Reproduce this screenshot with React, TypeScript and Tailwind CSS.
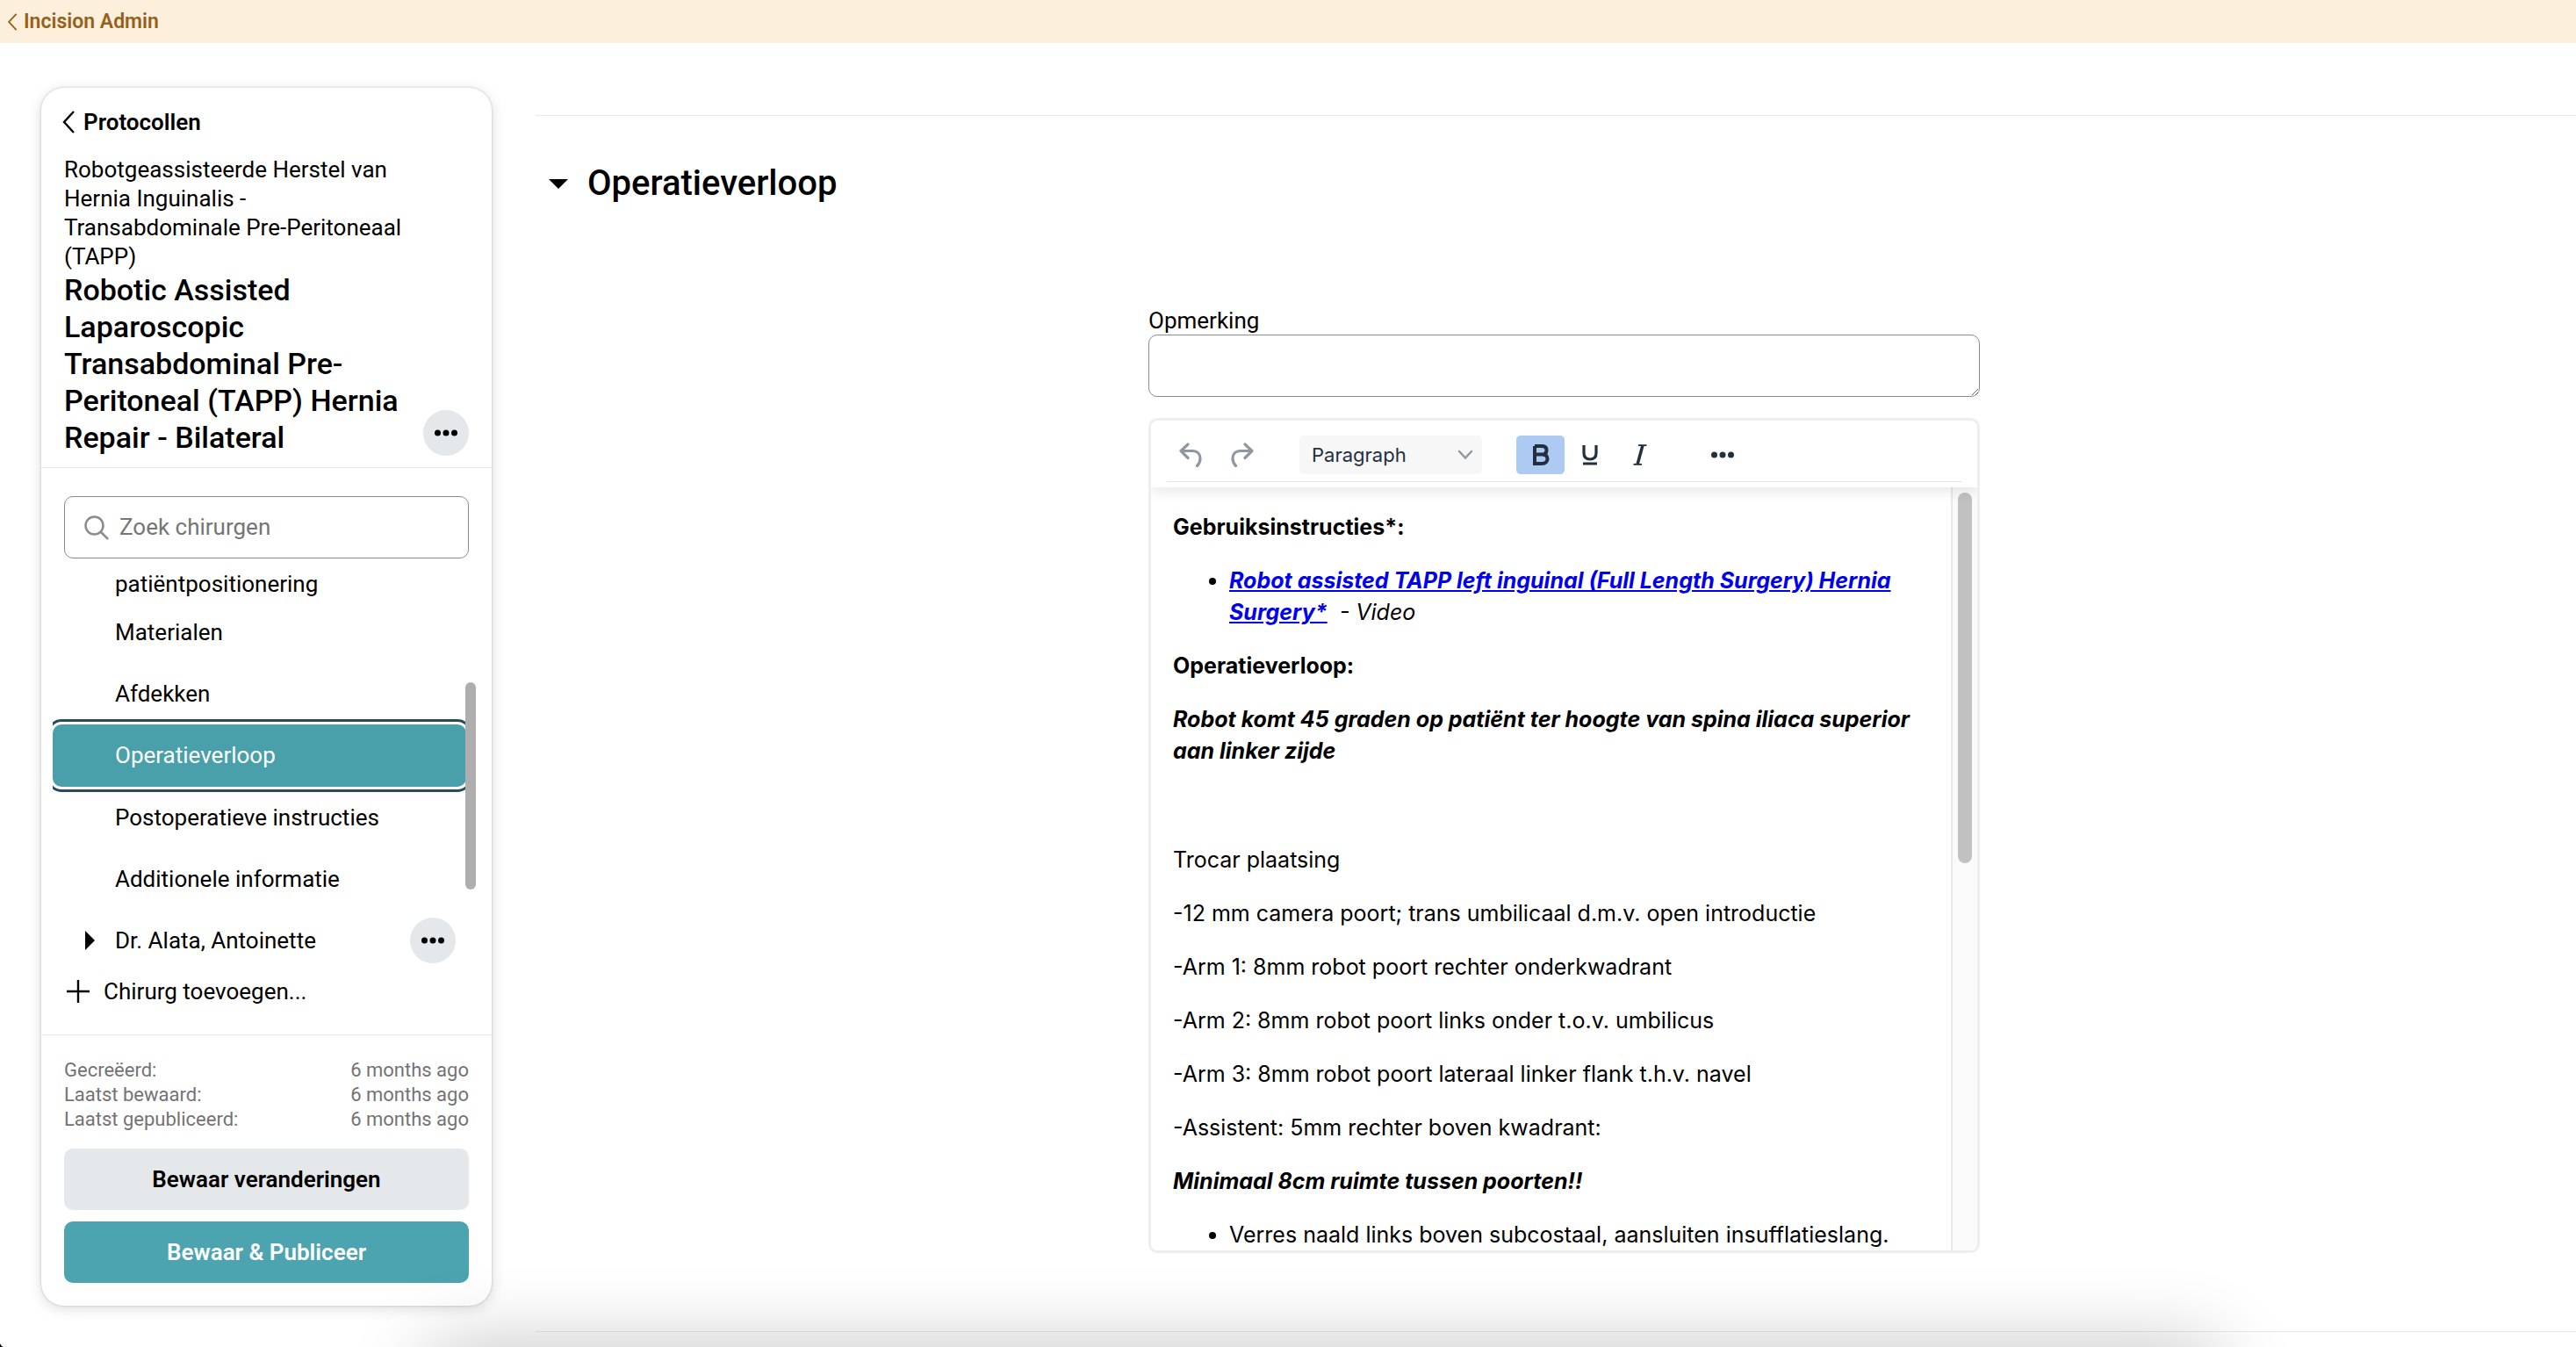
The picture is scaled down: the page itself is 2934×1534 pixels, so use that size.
import React from "react";

const items = ["Materialen", "Afdekken", "Operatieverloop", "Postoperatieve instructies", "Additionele informatie"];

const meta = [
  ["Gecreëerd:", "6 months ago"],
  ["Laatst bewaard:", "6 months ago"],
  ["Laatst gepubliceerd:", "6 months ago"],
];

const steps = [
  "-12 mm camera poort; trans umbilicaal d.m.v. open introductie",
  "-Arm 1: 8mm robot poort rechter onderkwadrant",
  "-Arm 2: 8mm robot poort links onder t.o.v. umbilicus",
  "-Arm 3: 8mm robot poort lateraal linker flank t.h.v. navel",
  "-Assistent: 5mm rechter boven kwadrant:",
];

function ChevronLeft({ className }: { className: string }) {
  return (
    <svg viewBox="0 0 14 26" className={className} fill="none" stroke="currentColor" strokeWidth="2.4">
      <path d="M13 1 2 13l11 12" />
    </svg>
  );
}

function MoreButton({ label }: { label: string }) {
  return (
    <button aria-label={label} className="flex size-[52px] shrink-0 items-center justify-center rounded-full bg-[#e4e8eb]">
      <svg viewBox="0 0 26 8" className="h-2 w-[26px]">
        <circle cx="3.5" cy="4" r="3.5" />
        <circle cx="13" cy="4" r="3.5" />
        <circle cx="22.5" cy="4" r="3.5" />
      </svg>
    </button>
  );
}

function Sidebar() {
  return (
    <aside className="mt-[51px] mb-[47px] ml-[47px] flex w-[513px] shrink-0 flex-col rounded-[26px] bg-white shadow-[0_0_3px_rgba(0,0,0,0.2),0_3px_16px_rgba(0,0,0,0.14)]">
      <header className="border-b border-[#e9e9e9] px-[26px] pt-[22px] pb-[13px]">
        <a href="#protocollen" className="-ml-0.5 flex items-center gap-2.5 text-[26px] leading-[34px] font-semibold">
          <ChevronLeft className="h-[26px] w-3.5" />
          Protocollen
        </a>
        <p className="mt-[21px] w-[400px] text-[26px] leading-[33px]">
          Robotgeassisteerde Herstel van Hernia Inguinalis - Transabdominale Pre-Peritoneaal (TAPP)
        </p>
        <div className="flex items-end justify-between">
          <h1 className="w-[400px] text-[34px] leading-[42px] font-medium">
            Robotic Assisted Laparoscopic Transabdominal Pre-Peritoneal (TAPP) Hernia Repair - Bilateral
          </h1>
          <MoreButton label="Protocolopties" />
        </div>
      </header>

      <label className="mx-[26px] mt-8 flex h-[71px] shrink-0 items-center gap-3 rounded-[10px] border border-[#8c8c8c] px-[22px]">
        <svg viewBox="0 0 28 28" className="size-7 shrink-0" fill="none" stroke="#8c8c8c" strokeWidth="2.5">
          <circle cx="11.5" cy="11.5" r="10" />
          <path d="m18.5 18.5 8.500 8.500" />
        </svg>
        <input
          type="search"
          aria-label="Zoek chirurgen"
          placeholder="Zoek chirurgen"
          className="w-full min-w-0 text-[26px] outline-none placeholder:text-[#757575]"
        />
      </label>

      <div className="relative min-h-0 flex-1 pr-[29px] pl-[13px] text-[26px]">
        <nav className="overflow-hidden">
          <a href="#patientpositionering" className="block h-[49px] pt-3 pl-[71px] leading-[34px]">patiëntpositionering</a>
          {items.map((item) =>
            item === "Operatieverloop" ? (
              <a
                key={item}
                href="#operatieverloop"
                aria-current="page"
                className="flex h-[71px] items-center rounded-[10px] bg-[#49a0aa] pl-[71px] text-white shadow-[0_0_0_3px_#fff,0_0_0_6px_#2a4c5a]"
              >
                {item}
              </a>
            ) : (
              <a key={item} href={"#" + item} className="flex h-[70px] items-center pl-[71px]">{item}</a>
            ),
          )}
        </nav>
        <div className="absolute top-[141px] right-[18px] h-[236px] w-3 rounded-full bg-[#aeaeae]" />
        <div className="flex h-[70px] items-center pr-3 pl-[37px]">
          <svg viewBox="0 0 11 22" className="mr-[23px] h-[22px] w-[11px]">
            <path d="M0 0 11 11 0 22z" />
          </svg>
          <span className="flex-1">Dr. Alata, Antoinette</span>
          <MoreButton label="Opties voor Dr. Alata" />
        </div>
        <button className="flex h-[46px] items-center gap-4 pl-4">
          <svg viewBox="0 0 26 26" className="size-[26px]" stroke="#000" strokeWidth="2.400">
            <path d="M13 0v26M0 13h26" />
          </svg>
          Chirurg toevoegen...
        </button>
      </div>

      <footer className="border-t border-[#e9e9e9] px-[26px] pt-[26px] pb-[26px]">
        <dl className="text-[22px] leading-7 text-[#737373]">
          {meta.map(([name, value]) => (
            <div key={name} className="flex justify-between">
              <dt>{name}</dt>
              <dd>{value}</dd>
            </div>
          ))}
        </dl>
        <button className="mt-[19px] h-[70px] w-full rounded-[10px] bg-[#e4e8eb] text-[26px] font-semibold">Bewaar veranderingen</button>
        <button className="mt-[13px] h-[70px] w-full rounded-[10px] bg-[#4ba4af] text-[26px] font-semibold text-white">Bewaar &amp; Publiceer</button>
      </footer>
    </aside>
  );
}

function Toolbar() {
  return (
    <div className="relative z-10 h-[76px] shrink-0 rounded-t-[8px] bg-white px-[18px] shadow-[0_4px_16px_rgba(0,0,0,0.1)]">
      <div className="flex h-[70px] items-center border-b border-[#e3e3e3] pt-[9px] text-[#222f3e]">
        <button aria-label="Ongedaan maken" className="ml-3.5">
          <svg viewBox="0 0 26 28" className="h-7 w-[26px]" fill="none" stroke="#9097a0" strokeWidth="3.200" strokeLinecap="round" strokeLinejoin="round">
            <path d="M10 2 2 9.500l8 8M2 9.500h13c6 0 9 4 9 8.500 0 4-1.500 6.500-3.500 8.500" />
          </svg>
        </button>
        <button aria-label="Opnieuw" className="ml-[33px]">
          <svg viewBox="0 0 26 28" className="h-7 w-[26px]" fill="none" stroke="#9097a0" strokeWidth="3.200" strokeLinecap="round" strokeLinejoin="round">
            <path d="m16 2 8 7.500-8 8M24 9.500H11c-6 0-9 4-9 8.500 0 4 1.500 6.500 3.500 8.500" />
          </svg>
        </button>
        <div className="relative ml-[52px] flex items-center">
          <select aria-label="Opmaak" className="h-11 w-[208px] appearance-none rounded-[5px] bg-[#f7f7f7] px-3.5 font-[Inter,sans-serif] text-[22px]">
            <option>Paragraph</option>
          </select>
          <svg viewBox="0 0 18 12" className="pointer-events-none absolute right-2.5 h-3 w-[18px]" fill="none" stroke="#9097a0" strokeWidth="2.500" strokeLinecap="round">
            <path d="m2 2 7 7.500L16 2" />
          </svg>
        </div>
        <button aria-label="Vet" aria-pressed="true" className="ml-[39px] flex h-11 w-[55px] items-center justify-center rounded-[5px] bg-[#adcaf3]">
          <svg viewBox="0 0 20 24" className="h-6 w-5" fill="none" stroke="currentColor" strokeWidth="4">
            <path d="M3 2h8c4 0 5.500 2 5.500 4.700S15 11.500 11 11.500H3M11 11.500c4.500 0 6.500 2 6.500 5S15.500 22 11 22H3V2" />
          </svg>
        </button>
        <button aria-label="Onderstrepen" className="ml-5">
          <svg viewBox="0 0 18 24" className="h-6 w-[18px]" fill="none" stroke="currentColor" strokeWidth="3.200">
            <path d="M2 1v9c0 5 3 7 7 7s7-2 7-7V1M1 22h16" />
          </svg>
        </button>
        <button aria-label="Cursief" className="ml-10">
          <svg viewBox="0 0 16 24" className="h-6 w-4" fill="none" stroke="currentColor">
            <path d="M6 1.200h9.500M.5 22.800H10" strokeWidth="1.800" />
            <path d="M11 1 5 23" strokeWidth="3.500" />
          </svg>
        </button>
        <button aria-label="Meer" className="ml-[73px]">
          <svg viewBox="0 0 26 8" className="h-2 w-[26px]" fill="currentColor">
            <circle cx="3.500" cy="4" r="3.500" />
            <circle cx="13" cy="4" r="3.500" />
            <circle cx="22.500" cy="4" r="3.500" />
          </svg>
        </button>
      </div>
    </div>
  );
}

function Editor() {
  return (
    <div className="mt-6 flex h-[951px] flex-col overflow-hidden rounded-[10px] border-3 border-[#eee]">
      <Toolbar />
      <div className="flex min-h-0 flex-1">
        <article className="flex flex-1 flex-col gap-[25px] overflow-hidden pt-[27px] pr-3 pl-[25px] font-[Inter,sans-serif] text-[25px] leading-9">
          <p className="font-bold">Gebruiksinstructies*:</p>
          <ul className="list-disc pl-16 italic">
            <li>
              <a href="#video" className="font-bold text-[#0000ee] underline">
                Robot assisted TAPP left inguinal (Full Length Surgery) Hernia Surgery*
              </a>
              <span>&nbsp; - Video</span>
            </li>
          </ul>
          <p className="font-bold">Operatieverloop:</p>
          <p className="font-bold italic">Robot komt 45 graden op patiënt ter hoogte van spina iliaca superior aan linker zijde</p>
          <p className="h-[38px] shrink-0" />
          <p>Trocar plaatsing</p>
          {steps.map((step) => (
            <p key={step}>{step}</p>
          ))}
          <p className="font-bold italic">Minimaal 8cm ruimte tussen poorten!!</p>
          <ul className="list-disc pl-16">
            <li>Verres naald links boven subcostaal, aansluiten insufflatieslang.</li>
          </ul>
        </article>
        <div className="w-[30px] border-l-2 border-[#e8e8e8] bg-[#fafafa] pt-1.5 pl-1.5">
          <div className="h-[422px] w-4 rounded-full bg-[#c1c1c1]" />
        </div>
      </div>
    </div>
  );
}

export default function App() {
  return (
    <div className="relative flex h-screen flex-col overflow-hidden bg-white font-[Roboto,sans-serif] text-black">
      <nav className="flex h-[49px] shrink-0 items-center bg-[#fcefdb] pt-px pl-2 text-[#975f1a]">
        <a href="#admin" className="flex items-center gap-[7px] text-[23px] font-semibold">
          <ChevronLeft className="h-5 w-3" />
          Incision Admin
        </a>
      </nav>
      <div className="flex min-h-0 flex-1">
        <Sidebar />
        <main className="ml-[50px] flex-1 pt-[82px]">
          <section className="h-[1385px] border-t border-[#e9e9e9] pl-[15px]">
            <h2>
              <button aria-expanded="true" className="mt-[51px] flex items-center gap-[22px] text-[40px] leading-[52px] font-medium">
                <svg viewBox="0 0 22 11" className="h-[11px] w-[22px]">
                  <path d="M0 0h22L11 11z" />
                </svg>
                Operatieverloop
              </button>
            </h2>
            <div className="pl-1">
              <div className="mx-auto mt-[114px] w-[947px]">
                <label htmlFor="remark" className="block text-[26px] leading-8">Opmerking</label>
                <textarea id="remark" className="block h-[71px] w-full rounded-[10px] border border-[#8c8c8c]" />
                <Editor />
              </div>
            </div>
          </section>
          <section className="h-5 border-t border-[#e9e9e9]" />
        </main>
      </div>
      <div className="pointer-events-none absolute top-full right-[410px] left-[490px] h-40 shadow-[0_0_90px_0_rgba(0,0,0,0.24)]" />
      <svg viewBox="0 0 4 4" className="absolute bottom-0 left-0 size-1">
        <path d="M0 0q1 3 4 4H0z" />
      </svg>
    </div>
  );
}
